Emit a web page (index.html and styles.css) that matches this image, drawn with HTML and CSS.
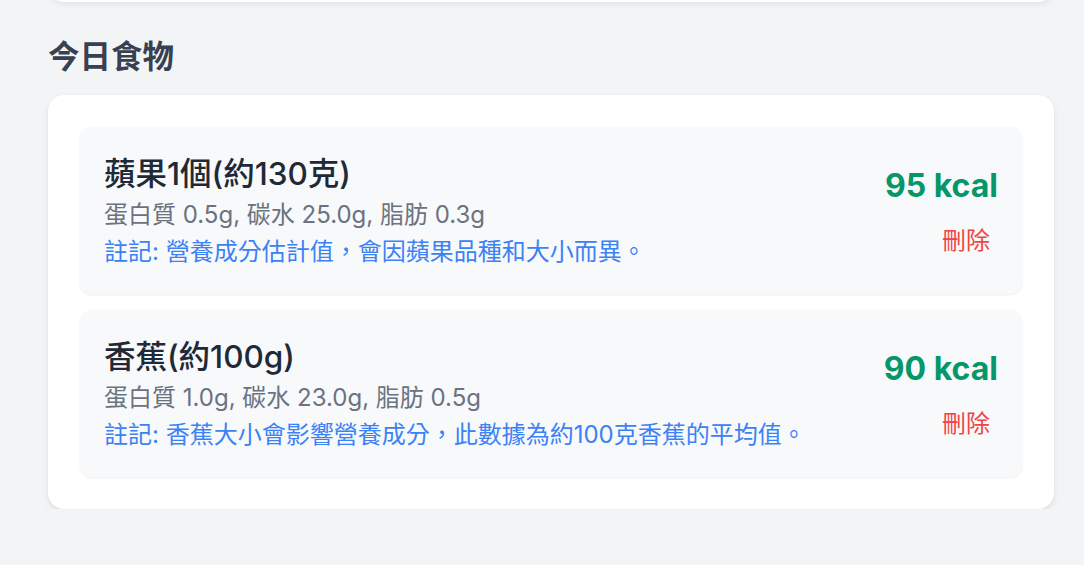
FILE: index.html
```html
<!DOCTYPE html>
<html lang="zh-Hant">
<head>
    <meta charset="UTF-8">
    <meta name="viewport" content="width=device-width, initial-scale=1.0">
    <title>今日食物</title>
    <link rel="stylesheet" href="styles.css">
</head>
<body>
    <div class="page">
        <div class="summary-card"></div>

        <h2 class="section-title">今日食物</h2>

        <div class="food-card">
            <div class="food-item">
                <div class="food-info">
                    <div class="food-name">蘋果1個(約130克)</div>
                    <div class="food-macros">蛋白質 0.5g, 碳水 25.0g, 脂肪 0.3g</div>
                    <div class="food-note">註記: 營養成分估計值，會因蘋果品種和大小而異。</div>
                </div>
                <div class="food-side">
                    <div class="food-kcal">95 kcal</div>
                    <button class="delete-btn">刪除</button>
                </div>
            </div>

            <div class="food-item">
                <div class="food-info">
                    <div class="food-name">香蕉(約100g)</div>
                    <div class="food-macros">蛋白質 1.0g, 碳水 23.0g, 脂肪 0.5g</div>
                    <div class="food-note">註記: 香蕉大小會影響營養成分，此數據為約100克香蕉的平均值。</div>
                </div>
                <div class="food-side">
                    <div class="food-kcal">90 kcal</div>
                    <button class="delete-btn">刪除</button>
                </div>
            </div>
        </div>
    </div>
</body>
</html>
```

FILE: styles.css
```css
body {
    margin: 0;
    background-color: #f3f4f6;
    font-family: Inter, "Noto Sans CJK TC", sans-serif;
    color: #1f2937;
}

.page {
    width: 1006px;
    margin-left: 48px;
}

.summary-card {
    height: 200px;
    margin-top: -198px;
    background: white;
    border-radius: 16px;
    box-shadow: 0 2px 6px rgba(0, 0, 0, 0.08);
}

.section-title {
    margin: 32px 0 16px;
    font-size: 31.5px;
    line-height: 45px;
    font-weight: 600;
    color: #374151;
}

.food-card {
    background: white;
    border-radius: 16px;
    padding: 32px;
    display: flex;
    flex-direction: column;
    gap: 16px;
    box-shadow: 0 4px 8px rgba(0, 0, 0, 0.06), 0 1px 3px rgba(0, 0, 0, 0.06);
}

.food-item {
    display: flex;
    justify-content: space-between;
    align-items: center;
    padding: 24px;
    background-color: #f8f9fa;
    border-radius: 12px;
    box-shadow: 0 1px 3px rgba(0, 0, 0, 0.07);
}

.food-name {
    font-size: 31.5px;
    line-height: 46px;
    font-weight: 500;
    color: #1f2937;
}

.food-macros {
    font-size: 24px;
    line-height: 36px;
    color: #6b7280;
}

.food-note {
    margin-top: 1px;
    font-size: 24px;
    line-height: 36px;
    color: #3b82f6;
}

.food-side {
    display: flex;
    flex-direction: column;
    align-items: flex-end;
}

.food-kcal {
    font-size: 32px;
    line-height: 48px;
    font-weight: 700;
    color: #059669;
}

.delete-btn {
    margin-top: 13px;
    padding: 0 8px;
    border: none;
    background: none;
    font-family: inherit;
    font-size: 24px;
    line-height: 36px;
    color: #ef4444;
    cursor: pointer;
}
```
